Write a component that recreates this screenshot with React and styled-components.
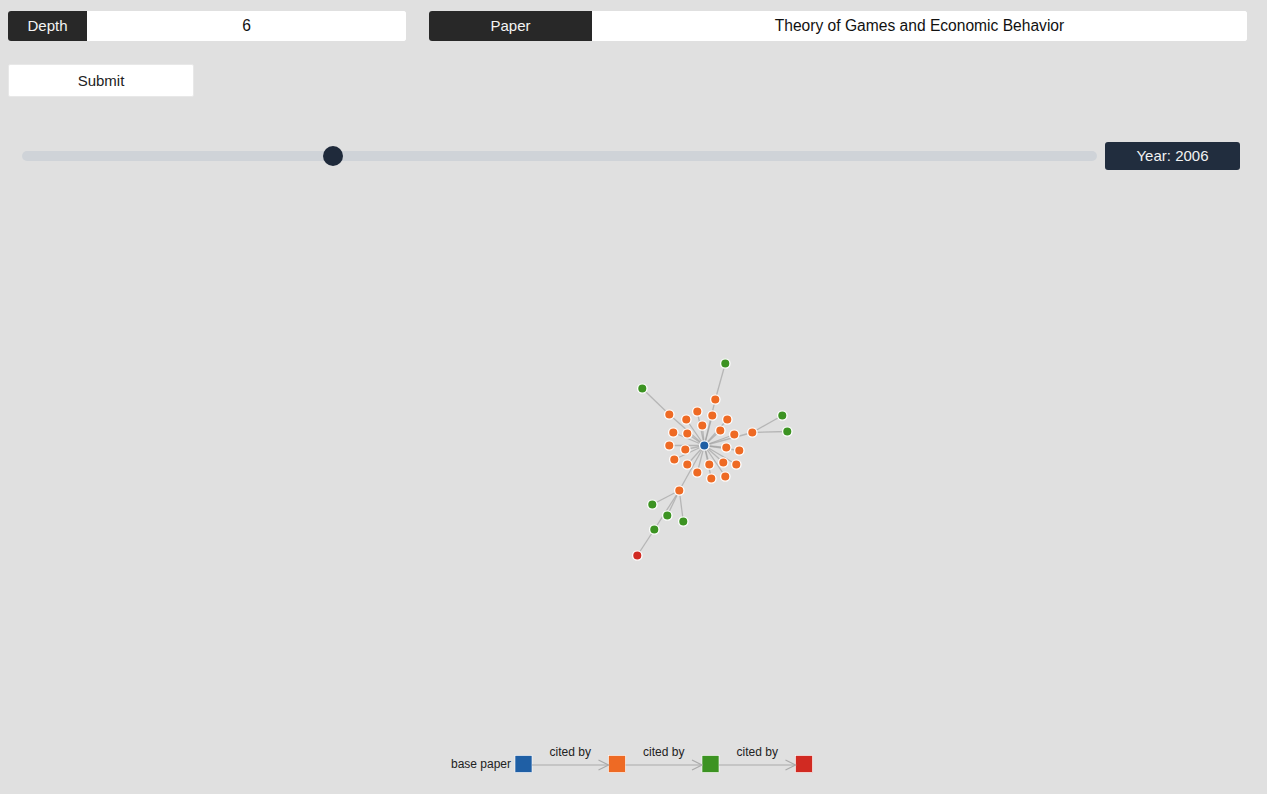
import React from "react";
import styled, { createGlobalStyle } from "styled-components";

const GlobalStyle = createGlobalStyle`
  html, body {
    margin: 0;
    padding: 0;
    background: #e0e0e0;
    font-family: "Liberation Sans", Arial, sans-serif;
  }
`;

const Page = styled.div`
  width: 1267px;
  height: 794px;
  display: flex;
  flex-direction: column;
  background: #e0e0e0;
  overflow: hidden;
`;

const TopRow = styled.div`
  display: flex;
  gap: 23px;
  padding: 11px 20px 0 8px;
`;

const Field = styled.div`
  display: flex;
  height: 30px;
  width: ${(p) => (p.$width ? `${p.$width}px` : "auto")};
  flex: ${(p) => (p.$width ? "none" : "1")};
  border-radius: 3px;
  overflow: hidden;
  background: #fff;
`;

const Label = styled.div`
  width: ${(p) => p.$width}px;
  box-sizing: border-box;
  padding-bottom: 2px;
  background: #282828;
  color: #f4f4f4;
  font-size: 15px;
  display: flex;
  align-items: center;
  justify-content: center;
`;

const Value = styled.input`
  flex: 1;
  min-width: 0;
  border: none;
  outline: none;
  background: #fff;
  text-align: center;
  font-family: "Liberation Sans", Arial, sans-serif;
  font-size: 15.6px;
  color: #111;
  padding: 0;
`;

const SubmitButton = styled.button`
  margin: 23px 0 0 8px;
  width: 186px;
  height: 33px;
  background: #fff;
  border: 1px solid #e8e8e8;
  border-radius: 2px;
  font-family: "Liberation Sans", Arial, sans-serif;
  font-size: 15px;
  color: #222;
  cursor: pointer;
`;

const SliderRow = styled.div`
  display: flex;
  align-items: center;
  gap: 8px;
  margin-top: 45px;
  padding: 0 27px 0 22px;
  height: 28px;
`;

const Track = styled.div`
  position: relative;
  flex: 1;
  height: 10px;
  border-radius: 5px;
  background: #cfd3d8;
`;

const Thumb = styled.div`
  position: absolute;
  top: 50%;
  width: 20px;
  height: 20px;
  border-radius: 50%;
  background: #1f2a3b;
  transform: translate(-50%, -50%);
`;

const YearBox = styled.div`
  width: 135px;
  height: 28px;
  box-sizing: border-box;
  padding-bottom: 2px;
  border-radius: 3px;
  background: #212d3e;
  color: #f2f2f2;
  font-size: 15px;
  display: flex;
  align-items: center;
  justify-content: center;
`;

const GraphArea = styled.div`
  flex: 1;
  position: relative;
`;

const Canvas = styled.svg`
  display: block;
  width: 1267px;
  height: 100%;
`;

const colors = {
  base: "#1f5fa5",
  c1: "#ee6a24",
  c2: "#3c9322",
  c3: "#d12a22",
};

const CENTER = [704, 445];

const orange = [
  [715, 399], [669, 414], [697, 411], [712, 415], [727, 419], [686, 419],
  [702, 425], [673, 432], [687, 433], [720, 430], [734, 434], [752, 432],
  [669, 445], [685, 449], [726, 447], [739, 450], [674, 459], [687, 464],
  [709, 464], [723, 462], [736, 464], [697, 472], [711, 478], [725, 476],
  [679, 490],
];

const green = [
  { p: [725, 363], from: [715, 399] },
  { p: [642, 388], from: [669, 414] },
  { p: [782, 415], from: [752, 432] },
  { p: [787, 431], from: [752, 432] },
  { p: [652, 504], from: [679, 490] },
  { p: [667, 515], from: [679, 490] },
  { p: [683, 521], from: [679, 490] },
  { p: [654, 529], from: [679, 490] },
];

const red = [{ p: [637, 555], from: [654, 529] }];

const TOP = 169.5;

const Graph = () => {
  const y = (v) => v - TOP;
  const edges = [
    ...orange.map((o) => [CENTER, o]),
    ...green.map((g) => [g.from, g.p]),
    ...red.map((r) => [r.from, r.p]),
  ];
  const node = (p, fill, key) => (
    <circle key={key} cx={p[0] + 0.3} cy={y(p[1])} r={4.7} fill={fill} stroke="#fff" strokeWidth={1.3} />
  );
  return (
    <Canvas>
      <g stroke="#999" strokeOpacity={0.6} strokeWidth={1.3}>
        {edges.map(([a, b], i) => (
          <line key={i} x1={a[0] + 0.3} y1={y(a[1])} x2={b[0] + 0.3} y2={y(b[1])} />
        ))}
      </g>
      {orange.map((p, i) => node(p, colors.c1, `o${i}`))}
      {green.map((g, i) => node(g.p, colors.c2, `g${i}`))}
      {red.map((r, i) => node(r.p, colors.c3, `r${i}`))}
      {node(CENTER, colors.base, "base")}
    </Canvas>
  );
};

const LegendWrap = styled.div`
  height: 54px;
  display: flex;
  justify-content: center;
`;

const LegendSvg = styled.svg`
  display: block;
  margin-left: -8px;
  font-family: "Liberation Sans", Arial, sans-serif;
  font-size: 12px;
`;

const Legend = () => {
  const boxes = [colors.base, colors.c1, colors.c2, colors.c3];
  const step = 93.5;
  const x0 = 75;
  return (
    <LegendWrap>
      <LegendSvg width={380} height={54} viewBox="0 0 380 54">
        <text x={71} y={27.5} textAnchor="end" fill="#222">
          base paper
        </text>
        {boxes.map((c, i) => (
          <rect key={c} x={x0 + i * step} y={15.5} width={17} height={17} fill={c} stroke="#fff" strokeWidth={0.6} />
        ))}
        {[0, 1, 2].map((i) => {
          const sx = x0 + 17 + i * step;
          const ex = x0 + (i + 1) * step;
          return (
            <g key={i}>
              <text x={(sx + ex) / 2} y={16} textAnchor="middle" fill="#222">
                cited by
              </text>
              <g stroke="#aaa" strokeWidth={1.2} fill="none">
                <line x1={sx} y1={25} x2={ex} y2={25} />
                <polyline points={`${ex - 10},20 ${ex},25 ${ex - 10},30`} />
              </g>
            </g>
          );
        })}
      </LegendSvg>
    </LegendWrap>
  );
};

const App = () => {
  const year = 2006;
  const minYear = 1944;
  const maxYear = 2158;
  const pct = ((year - minYear) / (maxYear - minYear)) * 100;
  return (
    <Page>
      <GlobalStyle />
      <TopRow>
        <Field $width={398}>
          <Label $width={79}>Depth</Label>
          <Value defaultValue="6" />
        </Field>
        <Field>
          <Label $width={163}>Paper</Label>
          <Value defaultValue="Theory of Games and Economic Behavior" />
        </Field>
      </TopRow>
      <div>
        <SubmitButton>Submit</SubmitButton>
      </div>
      <SliderRow>
        <Track>
          <Thumb style={{ left: `${pct}%` }} />
        </Track>
        <YearBox>Year: {year}</YearBox>
      </SliderRow>
      <GraphArea>
        <Graph />
      </GraphArea>
      <Legend />
    </Page>
  );
};

export default App;
